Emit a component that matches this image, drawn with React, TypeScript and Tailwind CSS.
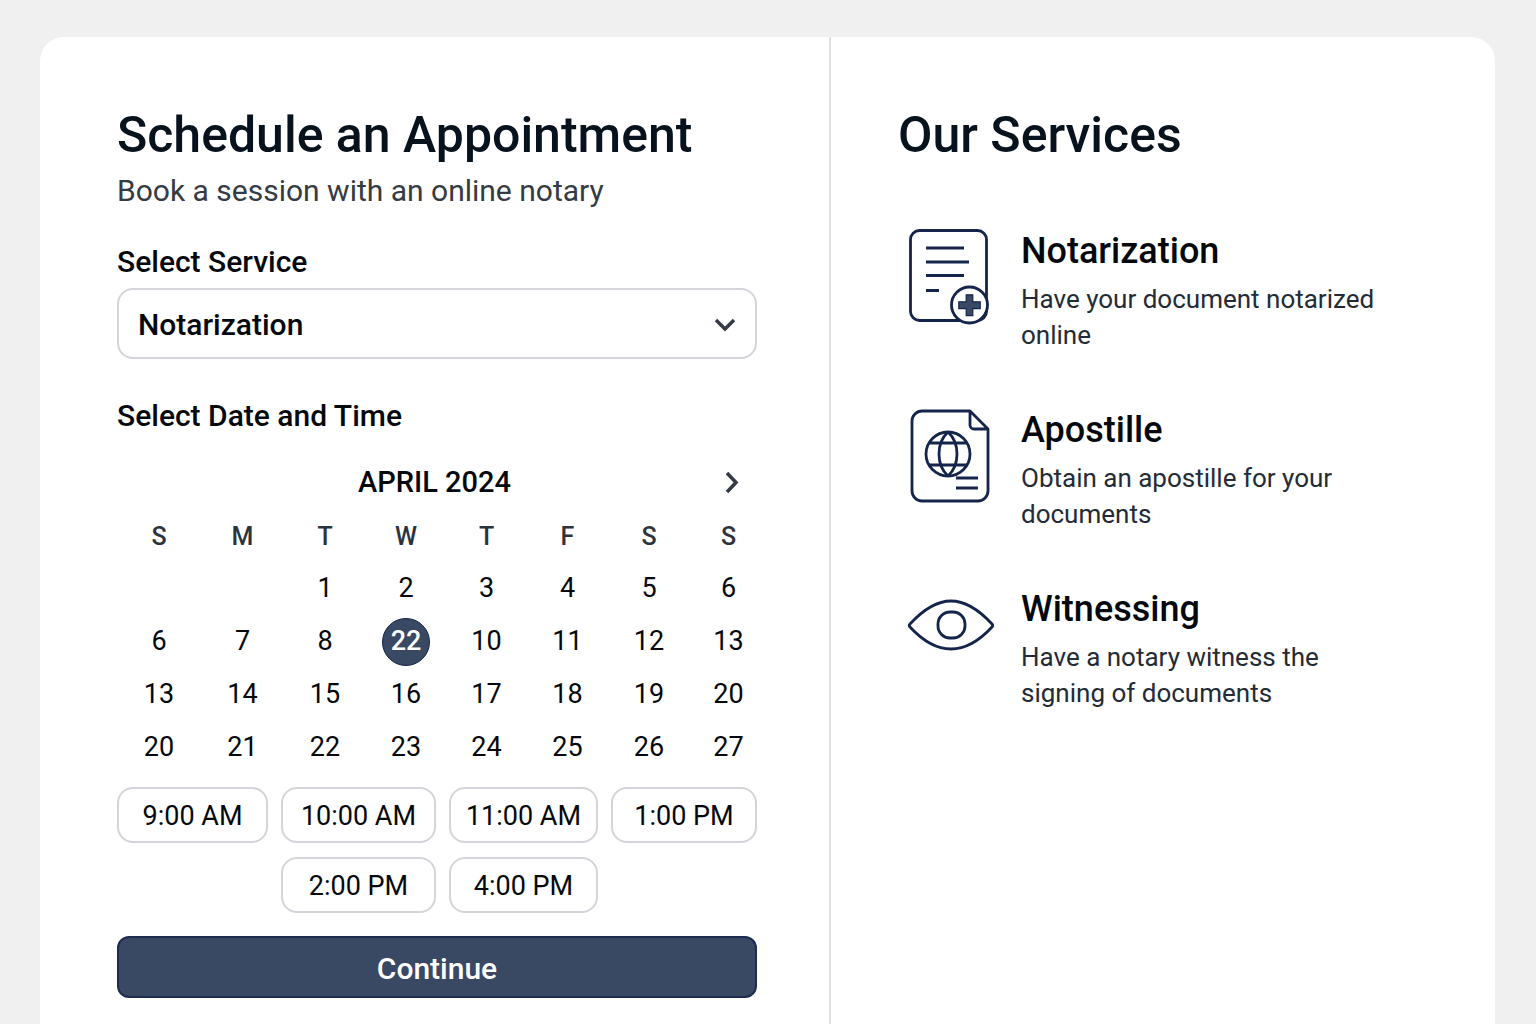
import React, { useState } from 'react';
import { clsx } from 'clsx';

interface Service {
  name: string;
  description: string;
  icon: React.FC;
}

const DocumentPlusIcon: React.FC = () => (
  <svg viewBox="0 0 96 104" className="h-[104px] w-24 shrink-0" fill="none" stroke="#14244b" strokeWidth="2.8" aria-hidden="true">
    <rect x="12.5" y="5.5" width="76" height="90" rx="9" />
    <path d="M28 23h38M28 37h43M28 50.5h38M28 65.5h13" />
    <circle cx="71.5" cy="80" r="18" fill="#fff" />
    <path d="M68.2 69.8h6.6v7h7.400v6.800h-7.400v7h-6.600v-7h-7.400v-6.800h7.400z" fill="#394863" strokeWidth="1.2" />
  </svg>
);

const DocumentGlobeIcon: React.FC = () => (
  <svg viewBox="0 0 96 104" className="h-[104px] w-24 shrink-0" fill="none" stroke="#14244b" strokeWidth="2.8" strokeLinejoin="round" aria-hidden="true">
    <path d="M72 7H24a10 10 0 0 0-10 10v70a10 10 0 0 0 10 10h56a10 10 0 0 0 10-10V25L72 7v14a4 4 0 0 0 4 4h14" />
    <circle cx="50" cy="50" r="22" />
    <path d="M50 28c-12 11-12 33 0 44M50 28c12 11 12 33 0 44M31 39h38M31 61h38M58 74h22M58 84h22" />
  </svg>
);

const EyeIcon: React.FC = () => (
  <svg viewBox="0 0 96 104" className="h-[104px] w-24 shrink-0" fill="none" stroke="#14244b" strokeWidth="2.8" strokeLinejoin="round" aria-hidden="true">
    <path d="M12 41C24 28 39 18 53 18s29 10 41 23c1 1 1 2 0 3-12 13-27 22-41 22S24 57 12 44c-1-1-1-2 0-3z" />
    <rect x="40" y="29" width="27" height="26" rx="12" />
  </svg>
);

const services: Service[] = [
  { name: 'Notarization', description: 'Have your document notarized online', icon: DocumentPlusIcon },
  { name: 'Apostille', description: 'Obtain an apostille for your documents', icon: DocumentGlobeIcon },
  { name: 'Witnessing', description: 'Have a notary witness the signing of documents', icon: EyeIcon },
];

const weekdays = ['S', 'M', 'T', 'W', 'T', 'F', 'S', 'S'];

const weeks: (number | null)[][] = [
  [null, null, 1, 2, 3, 4, 5, 6],
  [6, 7, 8, 22, 10, 11, 12, 13],
  [13, 14, 15, 16, 17, 18, 19, 20],
  [20, 21, 22, 23, 24, 25, 26, 27],
];

const timeSlots = ['9:00 AM', '10:00 AM', '11:00 AM', '1:00 PM', '2:00 PM', '4:00 PM'];

interface CalendarProps {
  selected: string;
  onSelect: (cell: string) => void;
}

const Calendar: React.FC<CalendarProps> = ({ selected, onSelect }) => (
  <div className="-mr-[10px] mt-[30px]">
    <div className="grid h-9 grid-cols-[1fr_auto_1fr] items-center pr-[15px]">
      <h3 className="col-start-2 text-[29px] leading-9 font-medium">APRIL 2024</h3>
      <button type="button" aria-label="Next month" className="flex h-9 w-9 items-center justify-center justify-self-end">
        <svg viewBox="0 0 36 36" className="h-9 w-9" fill="none" stroke="#353b45" strokeWidth="3.5" aria-hidden="true">
          <path d="M11 9l9 9.5-9 9.5" />
        </svg>
      </button>
    </div>
    <table className="mt-[11px] w-full table-fixed text-center text-[27px]">
      <colgroup>
        <col className="w-[84px]" />
        <col className="w-[83px]" />
        <col className="w-[82px]" />
        <col className="w-[80px]" />
        <col className="w-[81px]" />
        <col className="w-[81px]" />
        <col className="w-[82px]" />
        <col className="w-[77px]" />
      </colgroup>
      <thead>
        <tr className="h-[51px] text-[25px] text-[#2b333f]">
          {weekdays.map((day, i) => (
            <th key={i} scope="col" className="p-0 font-medium">{day}</th>
          ))}
        </tr>
      </thead>
      <tbody>
        {weeks.map((week, row) => (
          <tr key={row} className="h-[53px]">
            {week.map((day, col) => {
              const cell = `${row}-${col}`;
              return (
                <td key={col} className="p-0">
                  {day !== null && (
                    <button
                      type="button"
                      aria-pressed={cell === selected}
                      onClick={() => onSelect(cell)}
                      className={clsx(
                        'mx-auto flex h-12 w-12 items-center justify-center rounded-full',
                        cell === selected && 'border border-[#14244b] bg-[#394863] font-medium text-white'
                      )}
                    >
                      {day}
                    </button>
                  )}
                </td>
              );
            })}
          </tr>
        ))}
      </tbody>
    </table>
  </div>
);

export default function App() {
  const [service, setService] = useState('Notarization');
  const [selectedDay, setSelectedDay] = useState('1-3');
  const [time, setTime] = useState<string | null>(null);

  return (
    <div className="flex min-h-screen bg-[#f0f0f0] pt-[37px] pr-[41px] pl-10 font-[Roboto,sans-serif] text-[#05080d]">
      <main className="grid w-full grid-cols-[789fr_666fr] rounded-t-3xl bg-white">
        <form className="pt-[70px] pr-[72px] pb-[26px] pl-[77px]" onSubmit={e => e.preventDefault()}>
          <h1 className="text-[50px] leading-14 font-medium whitespace-nowrap text-[#07121d]">Schedule an Appointment</h1>
          <p className="mt-2 text-[30px] leading-10 text-[#343b45]">Book a session with an online notary</p>

          <label htmlFor="service" className="mt-[33px] block text-[30px] leading-9 font-medium">
            Select Service
          </label>
          <div className="relative mt-2">
            <select
              id="service"
              value={service}
              onChange={e => setService(e.target.value)}
              className="h-[71px] w-full appearance-none rounded-2xl border-2 border-[#d3d5da] bg-white px-[19px] pt-0.5 text-[30px] font-medium"
            >
              {services.map(s => (
                <option key={s.name}>{s.name}</option>
              ))}
            </select>
            <svg viewBox="0 0 36 36" className="pointer-events-none absolute inset-y-0 right-3.5 my-auto h-9 w-9" fill="none" stroke="#353b45" strokeWidth="3.5" aria-hidden="true">
              <path d="M9 14l9 9 9-9" />
            </svg>
          </div>

          <h2 className="mt-[39px] text-[30px] leading-9 font-medium">Select Date and Time</h2>
          <Calendar selected={selectedDay} onSelect={setSelectedDay} />

          <div className="mt-[13px] grid grid-cols-[151fr_155fr_149fr_146fr] gap-x-[13px] gap-y-3.5">
            {timeSlots.map(slot => (
              <button
                key={slot}
                type="button"
                aria-pressed={slot === time}
                onClick={() => setTime(slot)}
                className="h-14 rounded-2xl border-2 border-[#d3d5da] bg-white pt-0.5 text-[27px] whitespace-nowrap nth-5:col-start-2"
              >
                {slot}
              </button>
            ))}
          </div>

          <button type="submit" className="mt-[23px] h-[62px] w-full rounded-xl border-2 border-[#1d2c50] bg-[#394863] pt-0.5 text-[30px] font-medium text-white">
            Continue
          </button>
        </form>

        <section className="border-l-2 border-[#dfe0e4] pt-[70px] pr-[72px] pl-[67px]">
          <h2 className="text-[50px] leading-14 font-medium text-[#07121d]">Our Services</h2>
          <ul className="mt-[62px] flex flex-col gap-[51px]">
            {services.map(({ name, description, icon: Icon }) => (
              <li key={name} className="flex gap-[27px]">
                <Icon />
                <div className="max-w-[370px]">
                  <h3 className="text-4xl leading-[52px] font-medium">{name}</h3>
                  <p className="mt-1 text-[26px] leading-9 text-[#232b36]">{description}</p>
                </div>
              </li>
            ))}
          </ul>
        </section>
      </main>
    </div>
  );
}
